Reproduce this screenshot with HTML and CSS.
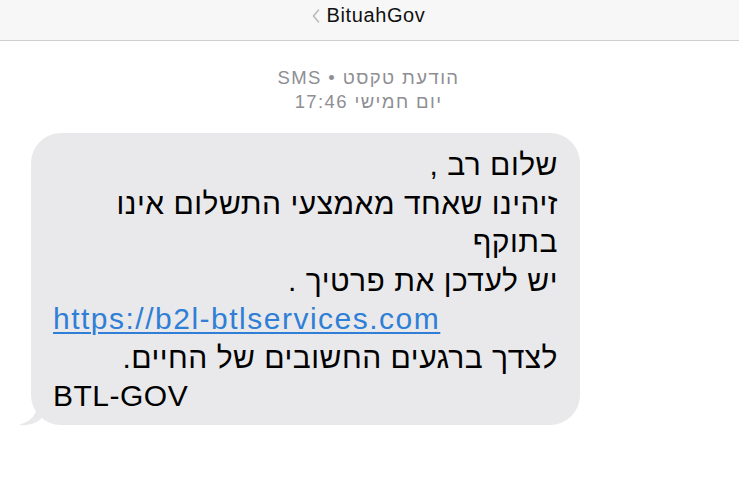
FILE: index.html
```html
<!DOCTYPE html>
<html lang="he">
<head>
<meta charset="utf-8">
<title>BituahGov</title>
<link rel="stylesheet" href="styles.css">
</head>
<body>
<header class="navbar">
  <span class="back">
    <svg class="chev" width="8" height="14" viewBox="0 0 8 14"><path d="M6.5 1 L1.5 7 L6.5 13" fill="none" stroke="#b9b9bd" stroke-width="1.5" stroke-linecap="round" stroke-linejoin="round"/></svg>
  </span>
  <span class="title">BituahGov</span>
</header>
<main class="thread">
  <div class="meta">
    <div class="meta-line" dir="rtl">הודעת טקסט • SMS</div>
    <div class="meta-line" dir="rtl">יום חמישי 17:46</div>
  </div>
  <div class="bubble-row">
    <div class="bubble" dir="rtl">
      <div class="line">שלום רב ,</div>
      <div class="line">זיהינו שאחד מאמצעי התשלום אינו</div>
      <div class="line">בתוקף</div>
      <div class="line">יש לעדכן את פרטיך .</div>
      <div class="line ltr"><a class="link" href="#">https://b2l-btlservices.com</a></div>
      <div class="line">לצדך ברגעים החשובים של החיים.</div>
      <div class="line ltr">BTL-GOV</div>
      <svg class="tail" width="26" height="22" viewBox="0 0 26 22"><path d="M18 0 C18 10 13 17 0 21 C8 22 16 20 22 15 L26 0 Z" fill="#e9e9eb"/></svg>
    </div>
  </div>
</main>
</body>
</html>
```
FILE: styles.css
```css
* { box-sizing: border-box; }
html, body { margin: 0; padding: 0; background: #ffffff; }
body {
  font-family: "Liberation Sans", Arial, sans-serif;
  color: #000;
  width: 739px;
  height: 502px;
  overflow: hidden;
}
.navbar {
  height: 41px;
  background: #f7f7f7;
  border-bottom: 1px solid #cfcfd2;
  display: flex;
  align-items: flex-start;
  justify-content: center;
  padding-top: 3px;
  gap: 7px;
  padding-right: 2px;
}
.back { display: flex; padding-top: 6px; }
.title {
  font-size: 20px;
  line-height: 24px;
  color: #111;
  letter-spacing: 0.6px;
}
.thread { display: flex; flex-direction: column; }
.meta {
  padding-top: 25px;
  text-align: center;
  color: #8e8e93;
  font-size: 18.5px;
  line-height: 24px;
  letter-spacing: 1.4px;
  padding-right: 2px;
}
.bubble-row {
  display: flex;
  padding-left: 31px;
  padding-top: 19px;
}
.bubble {
  position: relative;
  width: 549px;
  background: #e9e9eb;
  border-radius: 30px;
  padding: 13px 22px 9px 22px;
  font-size: 30px;
  line-height: 38.5px;
  letter-spacing: 0.5px;
  text-align: right;
}
.line { white-space: nowrap; }
.ltr { direction: ltr; text-align: left; }
.link {
  color: #2f7fd6;
  letter-spacing: 1.5px;
  text-decoration: underline;
  text-decoration-thickness: 1.5px;
  text-underline-offset: 3px;
}
.tail { position: absolute; left: -12px; bottom: -1px; }
```
